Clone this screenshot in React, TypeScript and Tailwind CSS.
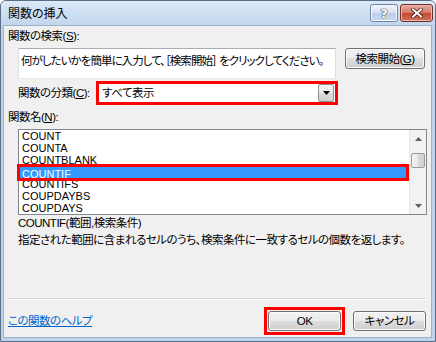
import React from "react";

const items = ["COUNT", "COUNTA", "COUNTBLANK", "COUNTIF", "COUNTIFS", "COUPDAYBS", "COUPDAYS"];

const btn =
  "flex items-center justify-center whitespace-nowrap rounded-[3px] border border-[#707070] bg-[linear-gradient(#f2f2f2,#ebebeb_50%,#dddddd_50%,#cfcfcf)] shadow-[inset_0_0_0_1px_#fbfbfb] text-[11.5px] leading-[14px] text-black";

export default function App() {
  return (
    <div className="w-[436px] h-[342px] flex flex-col overflow-hidden rounded-t-[6px] border border-[#5b6e88] bg-[#bfd4ec] font-['Liberation_Sans','Noto_Sans_CJK_JP',sans-serif] [font-feature-settings:'palt'] text-black whitespace-nowrap">
      {/* title bar */}
      <div className="h-[24px] shrink-0 flex items-start justify-between bg-[linear-gradient(#dbe8f7,#c2d6ed)]">
        <div className="pl-[7px] pt-[6px] text-[12px] leading-[14px]">関数の挿入</div>
        <div className="flex gap-[2px] mt-[3px] mr-[2px]">
          <div className="w-[28px] h-[18px] rounded-[3px] border border-[#6c84a4] bg-[linear-gradient(#eef3fa,#d6e2f1_50%,#bccfe7_50%,#c8d9ee)] shadow-[inset_0_0_0_1px_#f4f8fc] flex items-center justify-center">
            <span className="text-[13px] leading-[13px] font-bold text-white font-['DejaVu_Sans',sans-serif] [text-shadow:0_0_1px_#2c3e57,0_0_1px_#2c3e57,0_0_1px_#2c3e57]">?</span>
          </div>
          <div className="w-[33px] h-[18px] rounded-[3px] border border-[#6b2e26] bg-[linear-gradient(#e9a99f,#d8776a_50%,#c4452f_50%,#d2705c)] shadow-[inset_0_0_0_1px_#efb8ae] flex items-center justify-center">
            <svg width="12" height="10" viewBox="0 0 12 10">
              <path d="M2 1.5 L10 8.5 M10 1.5 L2 8.5" stroke="#4a1c15" strokeWidth="3.6" strokeLinecap="square" />
              <path d="M2 1.5 L10 8.5 M10 1.5 L2 8.5" stroke="#ffffff" strokeWidth="2" strokeLinecap="square" />
            </svg>
          </div>
        </div>
      </div>

      {/* client area */}
      <div className="flex-1 ml-[2px] mr-[3px] mb-[3px] border border-[#9db1ca] bg-[#f0f0f0] flex flex-col pl-[4px] pr-[5px] text-[11.5px] tracking-[-0.5px]">
        <div className="mt-[3px] h-[14px] leading-[14px]">
          関数の検索(<span className="underline">S</span>):
        </div>

        <div className="mt-[5px] flex items-start ml-[10px]">
          <div className="w-[318px] h-[31px] border border-[#abadb3] border-l-[#e2e3ea] border-r-[#dbdfe6] border-b-[#e3e9ef] bg-white pl-[2px] pt-[4px] leading-[16px] overflow-hidden tracking-[-0.95px]">
            何がしたいかを簡単に入力して、［検索開始］ をクリックしてください。
          </div>
          <div className={`${btn} ml-[9px] w-[80px] h-[21px]`}>
            検索開始(<span className="underline">G</span>)
          </div>
        </div>

        <div className="mt-[2px] ml-[10px] flex items-center">
          <div className="w-[78px] leading-[14px]">
            関数の分類(<span className="underline">C</span>):
          </div>
          <div className="w-[242px] h-[24px] border-[3px] border-[#ff0000] bg-white flex items-center justify-between">
            <span className="pl-[3px] leading-[14px]">すべて表示</span>
            <div className="mr-[1px] w-[16px] h-[18px] rounded-[2px] border border-[#8f8f8f] bg-[linear-gradient(#f2f2f2,#ebebeb_50%,#dddddd_50%,#cfcfcf)] flex items-center justify-center">
              <svg width="7" height="4" viewBox="0 0 7 4">
                <path d="M0 0 H7 L3.5 4 Z" fill="#000" />
              </svg>
            </div>
          </div>
        </div>

        <div className="mt-[5px] h-[14px] leading-[14px]">
          関数名(<span className="underline">N</span>):
        </div>

        <div className="mt-[5px] ml-[10px] w-[409px] h-[86px] shrink-0 border border-[#828790] bg-white flex tracking-normal">
          <div className="flex-1 flex flex-col">
            {items.map((it, i) =>
              i === 3 ? (
                <div key={it} className="relative h-[12px] bg-[#3399ff] text-white">
                  <span className="pl-[3px] text-[11px] leading-[12px]">{it}</span>
                  <div className="absolute left-[-2px] right-0 top-[-2px] bottom-[-3px] border-[3px] border-[#ff0000]" />
                </div>
              ) : (
                <div key={it} className="h-[12px] pl-[3px] text-[11px] leading-[12px]">
                  {it}
                </div>
              )
            )}
          </div>
          <div className="w-[17px] flex flex-col bg-[#f2f2f2] border-l border-[#e6e6e6]">
            <div className="h-[17px] flex items-center justify-center">
              <svg width="7" height="4" viewBox="0 0 7 4">
                <path d="M0 4 H7 L3.5 0 Z" fill="#5f5f5f" />
              </svg>
            </div>
            <div className="mt-[6px] mx-[1px] h-[15px] rounded-[2px] border border-[#9b9b9b] bg-[linear-gradient(90deg,#f2f2f2,#e8e8e8_50%,#d9d9d9_50%,#d0d0d0)]" />
            <div className="flex-1" />
            <div className="h-[17px] flex items-center justify-center">
              <svg width="7" height="4" viewBox="0 0 7 4">
                <path d="M0 0 H7 L3.5 4 Z" fill="#5f5f5f" />
              </svg>
            </div>
          </div>
        </div>

        <div className="ml-[10px] leading-[17px]">
          <div>COUNTIF(範囲,検索条件)</div>
          <div>指定された範囲に含まれるセルのうち、検索条件に一致するセルの個数を返します。</div>
        </div>

        <div className="mt-[49px] h-[2px] border-t border-[#d5d5d5] border-b border-b-white" />

        <div className="mt-[7px] flex items-center">
          <span className="text-[#0066cc] underline leading-[14px]">この関数のヘルプ</span>
          <div className="flex-1" />
          <div className="border-[3px] border-[#ff0000] p-[1px]">
            <div className={`${btn} w-[73px] h-[20px] border-[#3c7fb1] shadow-[inset_0_0_0_1px_#b5e2f8]`}>OK</div>
          </div>
          <div className={`${btn} ml-[8px] w-[73px] h-[20px]`}>キャンセル</div>
        </div>
      </div>
    </div>
  );
}
